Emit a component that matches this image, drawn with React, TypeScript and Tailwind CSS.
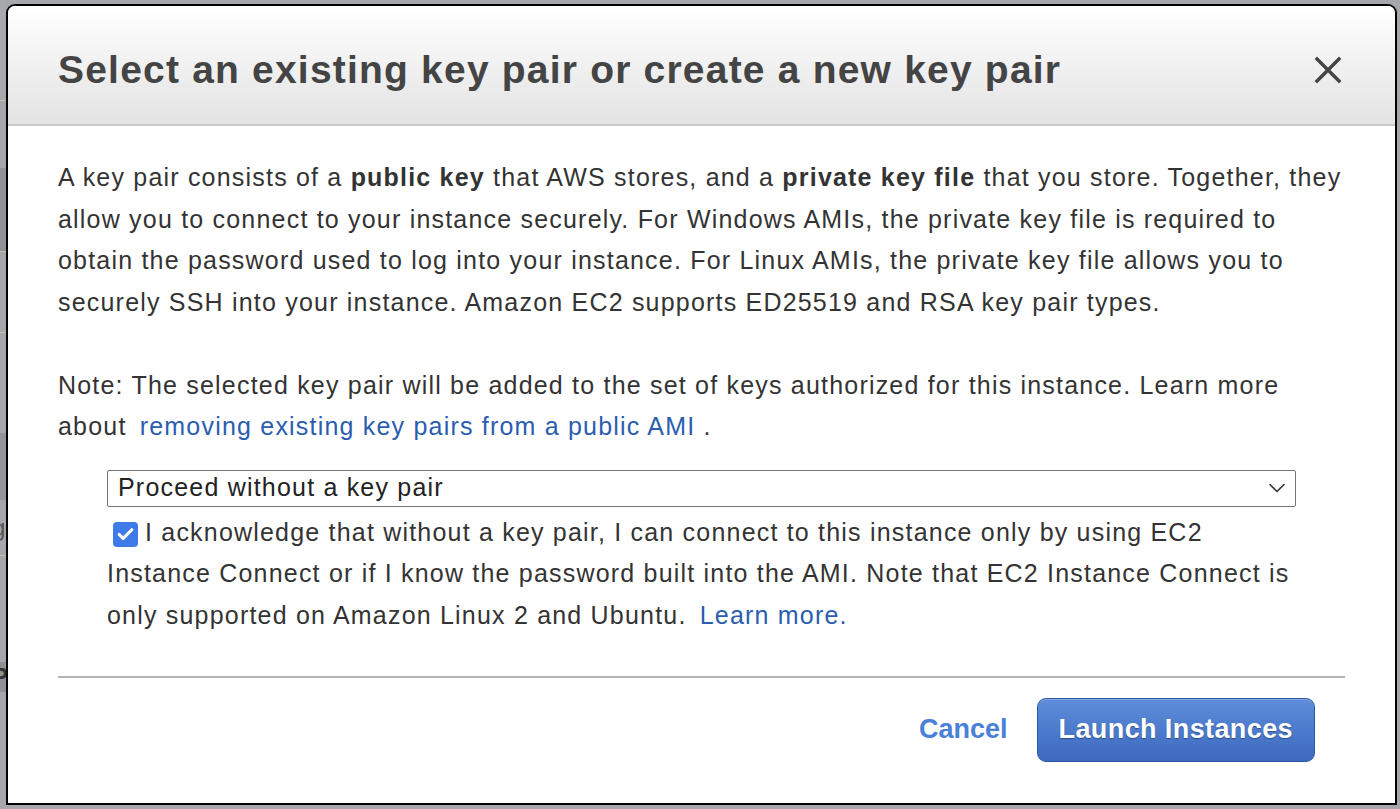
import { Check, ChevronDown } from 'lucide-react';

// ── Key pair modal (EC2 launch wizard) ──────────────────────────────────────

function CloseIcon() {
  return (
    <svg width="28" height="28" viewBox="0 0 28 28" className="text-[#444]">
      <path d="M3 3 L25 25 M25 3 L3 25" stroke="currentColor" strokeWidth="3.4" strokeLinecap="square" />
    </svg>
  );
}

function BackdropStrip() {
  // slivers of the page behind the modal
  return (
    <div className="w-[6px] flex flex-col shrink-0">
      <div className="h-[100px] bg-[#a7a9ac]" />
      <div className="h-[1px] bg-[#bfc1c3]" />
      <div className="h-[67px] bg-[#a5a7aa]" />
      <div className="h-[83px] bg-[#8f9194]" />
      <div className="h-[1px] bg-[#bfc1c3]" />
      <div className="h-[80px] bg-[#a5a7aa]" />
      <div className="h-[1px] bg-[#bfc1c3]" />
      <div className="h-[100px] bg-[#a5a7aa]" />
      <div className="h-[67px] bg-[#939598]" />
      <div className="h-[55px] bg-[#a5a7aa] text-[#555] text-[24px] leading-[55px] overflow-hidden -indent-[8px]">g</div>
      <div className="h-[1px] bg-[#bfc1c3]" />
      <div className="h-[106px] bg-[#a5a7aa]" />
      <div className="h-[30px] bg-[#8e9093] text-[#333] font-bold text-[24px] leading-[30px] overflow-hidden -indent-[8px]">P</div>
      <div className="flex-1 bg-[#a5a7aa]" />
    </div>
  );
}

export default function App() {
  return (
    <div className="w-[1400px] h-[809px] bg-[#a5a7aa] flex [font-family:'Liberation_Sans',Arial,Helvetica,sans-serif] overflow-hidden">
      <BackdropStrip />
      <div className="flex-1 flex flex-col pt-[4px] pb-[4px] pr-[3px]">
        <div className="flex-1 flex flex-col bg-white border-2 border-black rounded-t-[9px] overflow-hidden">
          {/* Header */}
          <div className="h-[120px] shrink-0 flex items-center justify-between pl-[50px] pr-[53px] pt-[10px] bg-gradient-to-b from-white to-[#e3e3e3] border-b-2 border-[#cacaca]">
            <h1 className="text-[39px] font-bold text-[#444] tracking-[1.2px]">
              Select an existing key pair or create a new key pair
            </h1>
            <button className="p-0 leading-none">
              <CloseIcon />
            </button>
          </div>

          {/* Body */}
          <div className="flex-1 flex flex-col px-[50px] pt-[31px] text-[25px] leading-[41.5px] tracking-[1.2px] text-[#333]">
            <p>
              A key pair consists of a <b>public key</b> that AWS stores, and a <b>private key file</b> that you
              store. Together, they allow you to connect to your instance securely. For Windows AMIs, the private
              key file is required to obtain the password used to log into your instance. For Linux AMIs, the private
              key file allows you to securely SSH into your instance. Amazon EC2 supports ED25519 and RSA key pair
              types.
            </p>
            <p className="mt-[41.5px]">
              Note: The selected key pair will be added to the set of keys authorized for this instance. Learn more
              about <a className="ml-[5px] text-[#2a5db0]">removing existing key pairs from a public AMI</a> .
            </p>

            <div className="px-[49px] mt-[22px]">
              <div className="h-[37px] border border-[#767676] rounded-[2px] flex items-center justify-between pl-[10px] pr-[4px] bg-white">
                <span className="text-[#222]">Proceed without a key pair</span>
                <ChevronDown className="w-[28px] h-[28px] text-[#333]" strokeWidth={1.4} />
              </div>
              <p className="mt-[5px]">
                <span className="inline-flex align-[-3px] ml-[6px] mr-[7px] w-[25px] h-[25px] rounded-[4px] bg-[#3e7be8] items-center justify-center">
                  <Check className="w-[19px] h-[19px] text-white" strokeWidth={4} />
                </span>
                I acknowledge that without a key pair, I can connect to this instance only by using EC2 Instance
                Connect or if I know the password built into the AMI. Note that EC2 Instance Connect is only
                supported on Amazon Linux 2 and Ubuntu. <a className="ml-[5px] text-[#2a5db0]">Learn more.</a>
              </p>
            </div>

            <div className="mt-[40px] h-[2px] bg-[#b3b3b3]" />

            <div className="flex justify-end items-center gap-[29px] mt-[20px] pr-[30px] tracking-normal">
              <a className="text-[27px] font-bold text-[#4a80d8]">Cancel</a>
              <button className="h-[64px] px-[21px] rounded-[9px] border border-[#2c58a6] bg-gradient-to-b from-[#5d8ddb] to-[#3d69bd] text-white text-[27px] font-bold tracking-[0.4px] [text-shadow:0_1px_1px_rgba(0,0,0,0.35)] shadow-[inset_0_1px_0_rgba(255,255,255,0.25)]">
                Launch Instances
              </button>
            </div>
          </div>
        </div>
      </div>
    </div>
  );
}
